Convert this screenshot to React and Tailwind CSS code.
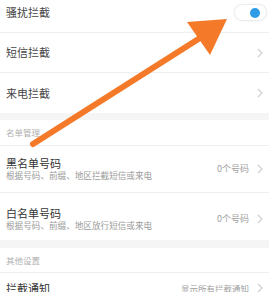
import React from "react";

const font = { fontFamily: '"Noto Sans CJK SC", "Noto Sans", sans-serif' };

function Chevron() {
  return (
    <svg width="6" height="10" viewBox="0 0 6 10" className="ml-[8px]">
      <path d="M1 1 L5 5 L1 9" fill="none" stroke="#cfcfcf" strokeWidth="1.2" />
    </svg>
  );
}

function Toggle() {
  return (
    <div className="w-[33px] h-[17px] rounded-full bg-white border border-[#ececec] shadow-[0_0_2px_rgba(0,0,0,0.08)] flex items-center justify-end pr-[6px]">
      <div className="w-[10px] h-[10px] rounded-full bg-[#2f9be6]" />
    </div>
  );
}

export default function App() {
  return (
    <div
      className="relative w-[269px] h-[292px] overflow-hidden bg-white"
      style={font}
    >
      <div className="flex flex-col">
        <div className="h-[33px] pb-[7px] pl-[6px] pr-[2px] flex items-center justify-between border-b border-[#efefef]">
          <span className="text-[11px] text-[#444]">骚扰拦截</span>
          <Toggle />
        </div>
        <div className="h-[40px] pl-[6px] pr-[6px] flex items-center justify-between border-b border-[#efefef]">
          <span className="text-[11px] text-[#444]">短信拦截</span>
          <Chevron />
        </div>
        <div className="h-[40px] pl-[6px] pr-[6px] flex items-center justify-between">
          <span className="text-[11px] text-[#444]">来电拦截</span>
          <Chevron />
        </div>
        <div className="h-[7px] bg-[#f5f5f5]" />
        <div className="h-[26px] pl-[6px] flex items-center border-b border-[#efefef]">
          <span className="text-[8.5px] text-[#b0b0b0]">名单管理</span>
        </div>
        <div className="h-[47px] pl-[6px] pr-[6px] flex items-center justify-between border-b border-[#efefef]">
          <div className="flex flex-col">
            <span className="text-[11px] leading-[13px] text-[#333]">黑名单号码</span>
            <span className="text-[8.6px] leading-[11px] text-[#9a9a9a]">
              根据号码、前缀、地区拦截短信或来电
            </span>
          </div>
          <div className="flex items-center">
            <span className="text-[9px] text-[#a0a0a0]">0个号码</span>
            <Chevron />
          </div>
        </div>
        <div className="h-[47px] pt-[4px] pl-[6px] pr-[6px] flex items-center justify-between">
          <div className="flex flex-col">
            <span className="text-[11px] leading-[13px] text-[#333]">白名单号码</span>
            <span className="text-[8.6px] leading-[11px] text-[#9a9a9a]">
              根据号码、前缀、地区放行短信或来电
            </span>
          </div>
          <div className="flex items-center">
            <span className="text-[9px] text-[#a0a0a0]">0个号码</span>
            <Chevron />
          </div>
        </div>
        <div className="h-[8px] bg-[#f5f5f5]" />
        <div className="h-[25px] pl-[6px] flex items-center border-b border-[#efefef]">
          <span className="text-[8.5px] text-[#b0b0b0]">其他设置</span>
        </div>
        <div className="h-[30px] pl-[6px] pr-[6px] flex items-center justify-between">
          <span className="text-[11px] text-[#333]">拦截通知</span>
          <div className="flex items-center">
            <span className="text-[8.5px] text-[#a0a0a0]">显示所有拦截通知</span>
            <Chevron />
          </div>
        </div>
      </div>

      <svg
        className="absolute inset-0 pointer-events-none"
        width="269"
        height="292"
        viewBox="0 0 269 292"
      >
        <line
          x1="33"
          y1="144"
          x2="200"
          y2="38"
          stroke="#f47a2a"
          strokeWidth="6"
          strokeLinecap="round"
        />
        <polygon points="227,19 187,22 210,55" fill="#f47a2a" />
      </svg>
    </div>
  );
}
